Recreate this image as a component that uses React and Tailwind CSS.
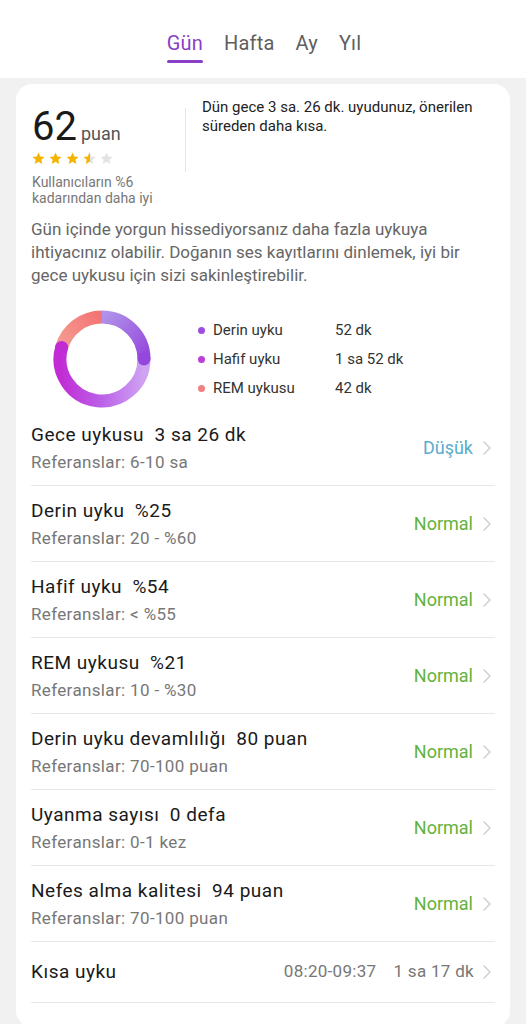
import React from "react";

const tabs = ["Gün", "Hafta", "Ay", "Yıl"];

const rows = [
  { title: "Gece uykusu", value: "3 sa 26 dk", ref: "Referanslar: 6-10 sa", status: "Düşük", low: true },
  { title: "Derin uyku", value: "%25", ref: "Referanslar: 20 - %60", status: "Normal" },
  { title: "Hafif uyku", value: "%54", ref: "Referanslar: < %55", status: "Normal" },
  { title: "REM uykusu", value: "%21", ref: "Referanslar: 10 - %30", status: "Normal" },
  { title: "Derin uyku devamlılığı", value: "80 puan", ref: "Referanslar: 70-100 puan", status: "Normal" },
  { title: "Uyanma sayısı", value: "0 defa", ref: "Referanslar: 0-1 kez", status: "Normal" },
  { title: "Nefes alma kalitesi", value: "94 puan", ref: "Referanslar: 70-100 puan", status: "Normal" },
];

const legend = [
  { label: "Derin uyku", value: "52 dk", dot: "bg-[#9b4ee0]" },
  { label: "Hafif uyku", value: "1 sa 52 dk", dot: "bg-[#bb3fd8]" },
  { label: "REM uykusu", value: "42 dk", dot: "bg-[#f28080]" },
];

const Chevron = () => (
  <svg width="10" height="16" viewBox="0 0 10 16" className="shrink-0">
    <polyline points="2,2 8,8 2,14" fill="none" stroke="#cdcdcd" strokeWidth="1.4" strokeLinecap="round" strokeLinejoin="round" />
  </svg>
);

const Star = ({ fill }) => (
  <svg width="15" height="15" viewBox="0 0 24 24">
    <defs>
      <linearGradient id="half">
        <stop offset="50%" stopColor="#f5b400" />
        <stop offset="50%" stopColor="#e3e3e3" />
      </linearGradient>
    </defs>
    <path
      d="M12 2.5l2.9 6.2 6.7.7-5 4.6 1.4 6.7L12 17.3l-5.9 3.4 1.4-6.7-5-4.6 6.7-.7z"
      fill={fill === "full" ? "#f5b400" : fill === "half" ? "url(#half)" : "#e3e3e3"}
    />
  </svg>
);

// angle in degrees, clockwise from 12 o'clock
const pt = (a, r = 42, c = 49) => {
  const rad = (a * Math.PI) / 180;
  return [c + r * Math.sin(rad), c - r * Math.cos(rad)];
};
const arc = (a1, a2) => {
  const [x1, y1] = pt(a1);
  const [x2, y2] = pt(a2);
  const large = a2 - a1 > 180 ? 1 : 0;
  return `M ${x1} ${y1} A 42 42 0 ${large} 1 ${x2} ${y2}`;
};

const Donut = () => {
  const [dx, dy] = pt(90);
  const [hx, hy] = pt(286);
  return (
    <svg width="98" height="98" viewBox="0 0 98 98">
      <defs>
        <linearGradient id="deep" gradientUnits="userSpaceOnUse" x1="49" y1="7" x2="91" y2="49">
          <stop offset="0" stopColor="#b093ea" />
          <stop offset="1" stopColor="#9546dc" />
        </linearGradient>
        <linearGradient id="light" gradientUnits="userSpaceOnUse" x1="91" y1="49" x2="7" y2="49">
          <stop offset="0" stopColor="#cfa3f3" />
          <stop offset="0.5" stopColor="#bb62e8" />
          <stop offset="1" stopColor="#c12bd4" />
        </linearGradient>
        <linearGradient id="rem" gradientUnits="userSpaceOnUse" x1="9" y1="38" x2="49" y2="7">
          <stop offset="0" stopColor="#f59c92" />
          <stop offset="1" stopColor="#f47373" />
        </linearGradient>
      </defs>
      <path d={arc(286, 360)} stroke="url(#rem)" strokeWidth="13" fill="none" />
      <path d={arc(90, 286)} stroke="url(#light)" strokeWidth="13" fill="none" />
      <circle cx={hx} cy={hy} r="6.5" fill="#c12bd4" />
      <path d={arc(0, 90)} stroke="url(#deep)" strokeWidth="13" fill="none" />
      <circle cx={dx} cy={dy} r="6.5" fill="#9546dc" />
    </svg>
  );
};

const App = () => {
  return (
    <div className="min-h-screen bg-[#f1f1f1] font-['Roboto',sans-serif]">
      <div className="h-[78px] bg-white flex justify-center">
        <div className="flex gap-[21px] pl-[2px]">
          {tabs.map((t, i) => (
            <div key={t} className="pt-[31px] flex flex-col">
              <span className={(i === 0 ? "text-[#8a3fc6] " : "text-[#5f5f5f] ") + "text-[20px] leading-[24px] tracking-[0.2px]"}>
                {t}
              </span>
              {i === 0 && <div className="mt-[5px] h-[3px] rounded-full bg-[#8a3fc6]" />}
            </div>
          ))}
        </div>
      </div>

      <div className="mx-[16px] mt-[6px] rounded-[16px] bg-white px-[15px] pb-[24px]">
        <div className="flex pt-[14px]">
          <div className="w-[154px] shrink-0 pl-[1px] pt-[5px]">
            <div className="flex items-baseline">
              <span className="text-[40px] leading-[48px] text-[#1a1a1a]">62</span>
              <span className="ml-[4px] text-[18px] text-[#555]">puan</span>
            </div>
            <div className="flex gap-[2px] -ml-[1px]">
              <Star fill="full" />
              <Star fill="full" />
              <Star fill="full" />
              <Star fill="half" />
              <Star fill="none" />
            </div>
            <p className="mt-[8px] text-[14px] leading-[16px] text-[#777]">
              Kullanıcıların %6
              <br />
              kadarından daha iyi
            </p>
          </div>
          <div className="mt-[10px] h-[64px] w-px shrink-0 bg-[#e6e6e6]" />
          <p className="pl-[16px] text-[15px] leading-[19px] text-[#222]">
            Dün gece 3 sa. 26 dk. uyudunuz, önerilen süreden daha kısa.
          </p>
        </div>

        <p className="mt-[12px] text-[17px] leading-[23px] text-[#666]">
          Gün içinde yorgun hissediyorsanız daha fazla uykuya ihtiyacınız olabilir. Doğanın ses kayıtlarını dinlemek, iyi bir gece uykusu için sizi sakinleştirebilir.
        </p>

        <div className="mt-[23px] flex items-center">
          <div className="ml-[22px]">
            <Donut />
          </div>
          <div className="ml-[47px] flex flex-col gap-[11px]">
            {legend.map((l) => (
              <div key={l.label} className="flex items-center text-[15px] leading-[18px] text-[#333]">
                <span className={"h-[7px] w-[7px] rounded-full " + l.dot} />
                <span className="ml-[8px] w-[122px]">{l.label}</span>
                <span>{l.value}</span>
              </div>
            ))}
          </div>
        </div>

        <div className="mt-[2px]">
          {rows.map((r) => (
            <div key={r.title} className="flex items-center border-b border-[#e8e8e8] h-[76px]">
              <div className="flex-1">
                <div className="whitespace-pre text-[19px] leading-[26px] tracking-[0.5px] text-[#1a1a1a]">
                  {r.title + "  " + r.value}
                </div>
                <div className="mt-[3px] text-[17px] leading-[22px] tracking-[0.35px] text-[#777]">{r.ref}</div>
              </div>
              <span className={(r.low ? "text-[#5aaccb] " : "text-[#62b23d] ") + "text-[18px]"}>
                {r.status}
              </span>
              <div className="ml-[9px] mr-[3px]">
                <Chevron />
              </div>
            </div>
          ))}
          <div className="flex items-center border-b border-[#e8e8e8] h-[61px]">
            <span className="flex-1 text-[19px] tracking-[0.5px] text-[#1a1a1a]">Kısa uyku</span>
            <span className="text-[17px] tracking-[0.3px] text-[#777]">08:20-09:37</span>
            <span className="ml-[17px] text-[17px] tracking-[0.3px] text-[#777]">1 sa 17 dk</span>
            <div className="ml-[8px] mr-[3px]">
              <Chevron />
            </div>
          </div>
        </div>
      </div>
    </div>
  );
};

export default App;
